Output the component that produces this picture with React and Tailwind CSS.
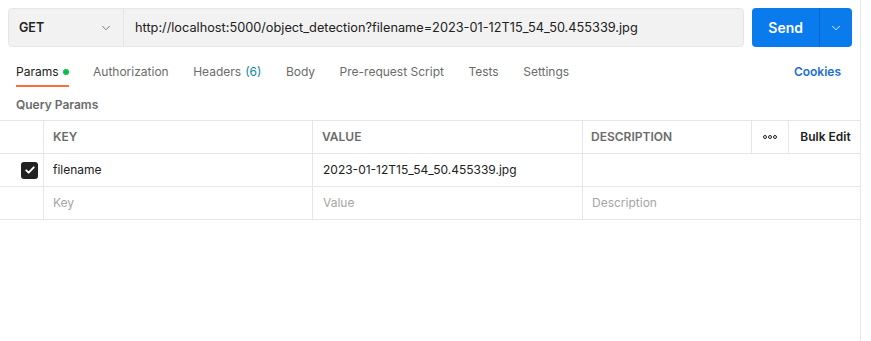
import { ChevronDown } from 'lucide-react'

const tabs = [
  { label: 'Params', active: true, dot: true },
  { label: 'Authorization' },
  { label: 'Headers', count: '(6)' },
  { label: 'Body' },
  { label: 'Pre-request Script' },
  { label: 'Tests' },
  { label: 'Settings' },
]

export default function App() {
  return (
    <div className="h-[341px] w-[861px] border-r border-[#e6e6e6] bg-white font-['Inter',sans-serif] text-[12px] leading-[18px] text-[#212121]">
      {/* request bar */}
      <div className="flex px-2 pt-2">
        <div className="flex h-[39px] w-[737px] rounded-[4px] border border-[#e6e6e6] bg-[#f2f2f2]">
          <div className="flex w-[115px] items-center justify-between border-r border-[#e6e6e6] pl-[10px] pr-[10px]">
            <span className="text-[12.5px] font-semibold text-[#212121]">GET</span>
            <ChevronDown className="h-[14px] w-[14px] text-[#6b6b6b]" strokeWidth={1.5} />
          </div>
          <div className="flex items-center pl-[11px] text-[12.75px] text-[#212121]">
            http://localhost:5000/object_detection?filename=2023-01-12T15_54_50.455339.jpg
          </div>
        </div>
        <div className="ml-2 flex h-[39px] w-[100px] overflow-hidden rounded-[4px] bg-[#097bed] text-white">
          <div className="flex w-[68px] items-center justify-center border-r border-[#0265d2] text-[14px] font-semibold">
            Send
          </div>
          <div className="flex flex-1 items-center justify-center">
            <ChevronDown className="h-[14px] w-[14px]" strokeWidth={1.5} />
          </div>
        </div>
      </div>

      {/* tabs */}
      <div className="mt-[16px] flex items-start justify-between pl-4 pr-[19px]">
        <div className="flex gap-[24.5px]">
          {tabs.map((t) => (
            <div key={t.label} className="flex flex-col">
              <div className={`flex items-center gap-[4px] ${t.active ? 'text-[#212121]' : 'text-[#6b6b6b]'}`}>
                <span>{t.label}</span>
                {t.count && <span className="text-[#0b8a9a]">{t.count}</span>}
                {t.dot && <span className="h-[6px] w-[6px] rounded-full bg-[#0cbb52]" />}
              </div>
              <div className={`mt-[4px] h-[2px] ${t.active ? 'bg-[#ff6c37]' : 'bg-transparent'}`} />
            </div>
          ))}
        </div>
        <span className="font-semibold text-[#1d6ed8]">Cookies</span>
      </div>

      <div className="mt-[9px] pl-4 font-semibold text-[#6b6b6b]">Query Params</div>

      {/* table */}
      <div className="mt-[6px] border-t border-[#e6e6e6]">
        <div className="flex h-[33px] border-b border-[#e6e6e6] font-semibold text-[#6b6b6b]">
          <div className="w-[44px] border-r border-[#e6e6e6]" />
          <div className="flex w-[269px] items-center border-r border-[#e6e6e6] pl-[9px]">KEY</div>
          <div className="flex w-[270px] items-center border-r border-[#e6e6e6] pl-[9px]">VALUE</div>
          <div className="flex w-[169px] items-center border-r border-[#e6e6e6] pl-[8px]">DESCRIPTION</div>
          <div className="flex w-[37px] items-center justify-center gap-[1px] border-r border-[#e6e6e6]">
            <span className="h-[4px] w-[4px] rounded-full border border-[#212121]" />
            <span className="h-[4px] w-[4px] rounded-full border border-[#212121]" />
            <span className="h-[4px] w-[4px] rounded-full border border-[#212121]" />
          </div>
          <div className="flex flex-1 items-center justify-center pl-[2px] text-[#212121]">Bulk Edit</div>
        </div>
        <div className="flex h-[33px] border-b border-[#e6e6e6]">
          <div className="flex w-[44px] items-center justify-end border-r border-[#e6e6e6] pr-[5px]">
            <div className="flex h-[17px] w-[17px] items-center justify-center rounded-[3px] bg-[#212121]">
              <svg viewBox="0 0 16 16" className="h-[12px] w-[12px]" fill="none" stroke="white" strokeWidth="2.6" strokeLinecap="round" strokeLinejoin="round">
                <path d="M3 8.5l3.2 3L13 4.5" />
              </svg>
            </div>
          </div>
          <div className="flex w-[269px] items-center border-r border-[#e6e6e6] pl-[9px]">filename</div>
          <div className="flex w-[270px] items-center border-r border-[#e6e6e6] pl-[10px]">2023-01-12T15_54_50.455339.jpg</div>
          <div className="flex-1" />
        </div>
        <div className="flex h-[33px] border-b border-[#e6e6e6] text-[#a6a6a6]">
          <div className="w-[44px] border-r border-[#e6e6e6]" />
          <div className="flex w-[269px] items-center border-r border-[#e6e6e6] pl-[9px]">Key</div>
          <div className="flex w-[270px] items-center border-r border-[#e6e6e6] pl-[10px]">Value</div>
          <div className="flex flex-1 items-center pl-[9px]">Description</div>
        </div>
      </div>
    </div>
  )
}
